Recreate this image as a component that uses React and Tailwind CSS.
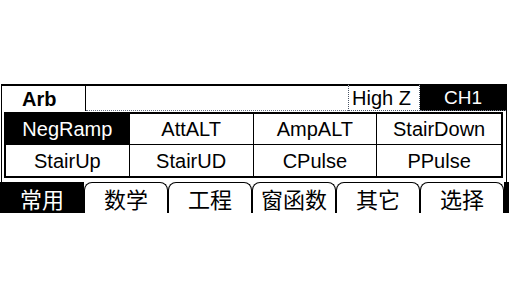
import React from "react";

const latin = { fontFamily: '"Liberation Sans", Arial, sans-serif' };
const cjk = { fontFamily: '"Noto Sans CJK SC", "Liberation Sans", sans-serif' };

const cells = [
  "NegRamp", "AttALT", "AmpALT", "StairDown",
  "StairUp", "StairUD", "CPulse", "PPulse",
];

const tabs = ["常用", "数学", "工程", "窗函数", "其它", "选择"];

export default function App() {
  return (
    <div className="w-[509px] h-[298px] bg-white overflow-hidden" style={latin}>
      <div className="pt-[84px]">
        {/* framed area */}
        <div className="ml-[1px] w-[506px] border-l border-r border-black pb-[4px]">
          {/* header */}
          <div className="flex h-[27px]">
            <div className="w-[84px] border-t-2 border-r border-black flex items-center pl-[20px] text-[20px] font-bold leading-none text-black">
              Arb
            </div>
            <div className="flex-1 border-t-2 border-black border-b border-b-gray-500 [border-bottom-style:dotted]" />
            <div className="w-[72px] border-t-2 border-t-black border-l border-r border-b border-gray-600 border-dotted [border-top-style:solid] flex items-center pl-[3px] text-[20px] leading-none text-black">
              High Z
            </div>
            <div className="w-[86px] bg-black text-white flex items-center justify-center text-[19px] leading-none border-b border-dotted border-gray-500">
              CH1
            </div>
          </div>
          {/* grid */}
          <div className="mt-[1px] ml-[2px] w-[499px] border-2 border-black grid grid-cols-4">
            {cells.map((c, i) => (
              <div
                key={c}
                className={
                  "h-[31px] flex items-center justify-center text-[20px] leading-none border-black " +
                  (i % 4 !== 3 ? "border-r " : "") +
                  (i < 4 ? "border-b " : "") +
                  (i === 0 ? "bg-black text-white" : "bg-white text-black")
                }
              >
                {c}
              </div>
            ))}
          </div>
        </div>
        {/* tabs */}
        <div className="flex h-[31px] w-[509px]">
          {tabs.map((t, i) => (
            <div
              key={t}
              style={cjk}
              className={
                "w-[84px] flex items-center justify-center text-[22px] leading-none " +
                (i === 0
                  ? "bg-black text-white"
                  : "bg-white text-black border-t border-l border-r border-black rounded-t-[8px]")
              }
            >
              {t}
            </div>
          ))}
          <div className="flex-1 bg-black" />
        </div>
      </div>
    </div>
  );
}
